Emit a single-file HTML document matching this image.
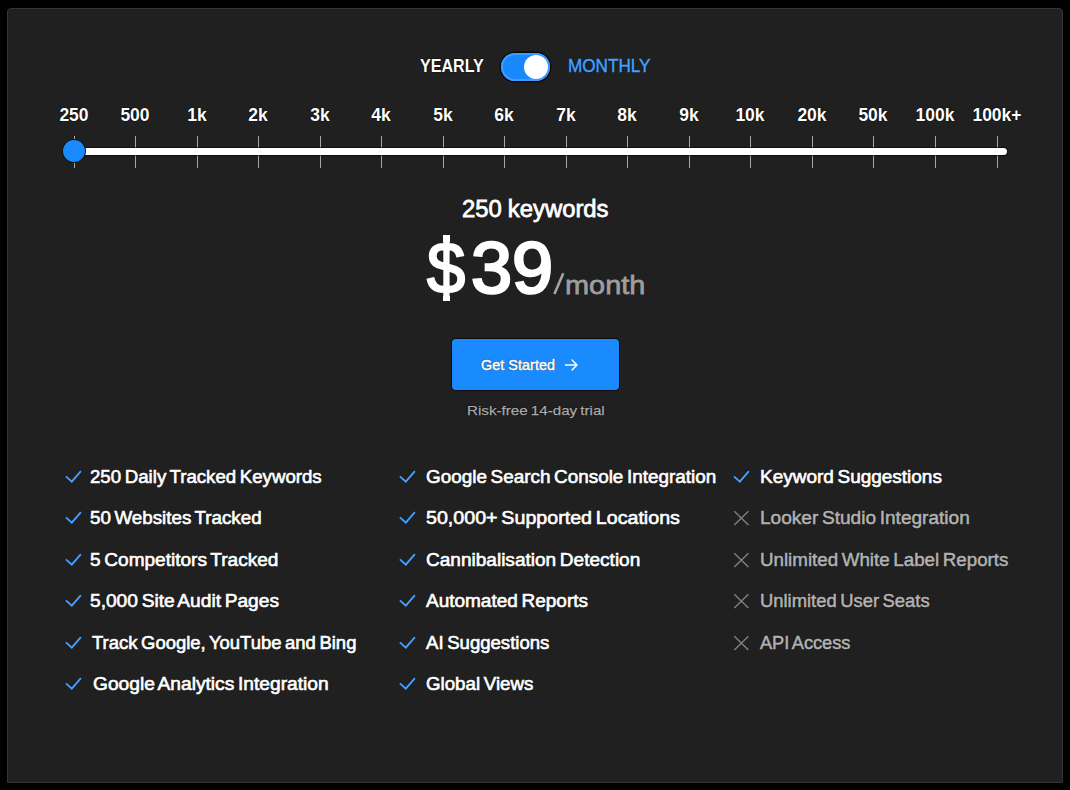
<!DOCTYPE html>
<html><head><meta charset="utf-8"><style>
html,body{margin:0;padding:0;background:#000;width:1070px;height:790px;overflow:hidden;}
body{position:relative;font-family:"Liberation Sans",sans-serif;}
.panel{position:absolute;left:7px;top:8px;width:1054px;height:773px;background:#202020;border:1px solid #363636;border-radius:4px 4px 0 0;}
.t{position:absolute;white-space:nowrap;transform-origin:0 0;text-shadow:0 0 1px #000,0 0 1px #000;}
.r{position:absolute;}
</style></head><body>
<div class="panel"></div>
<div class="t" style="left:420.30px;top:57.05px;font-size:18.5px;line-height:18.5px;font-weight:700;color:#fff;transform:scaleX(0.8684);">YEARLY</div>
<div class="r" style="left:500.8px;top:52.7px;width:49.1px;height:28.8px;background:#1a88fd;border-radius:15px;box-shadow:0 0 0 1.4px #0a0a0a, inset 0 0 0 2px #3d9cff;"></div>
<div class="r" style="left:523.6px;top:54.9px;width:24px;height:24px;background:#fff;border-radius:50%;"></div>
<div class="t" style="left:567.50px;top:57.05px;font-size:18.5px;line-height:18.5px;font-weight:400;color:#42a2ff;-webkit-text-stroke:0.5px #42a2ff;transform:scaleX(0.9259);">MONTHLY</div>
<div class="r" style="left:73.5px;top:136px;width:1px;height:32px;background:#a6a6a6;"></div>
<div class="r" style="left:134.5px;top:136px;width:1px;height:32px;background:#a6a6a6;"></div>
<div class="r" style="left:196.5px;top:136px;width:1px;height:32px;background:#a6a6a6;"></div>
<div class="r" style="left:257.5px;top:136px;width:1px;height:32px;background:#a6a6a6;"></div>
<div class="r" style="left:319.5px;top:136px;width:1px;height:32px;background:#a6a6a6;"></div>
<div class="r" style="left:380.5px;top:136px;width:1px;height:32px;background:#a6a6a6;"></div>
<div class="r" style="left:442.5px;top:136px;width:1px;height:32px;background:#a6a6a6;"></div>
<div class="r" style="left:503.5px;top:136px;width:1px;height:32px;background:#a6a6a6;"></div>
<div class="r" style="left:565.5px;top:136px;width:1px;height:32px;background:#a6a6a6;"></div>
<div class="r" style="left:626.5px;top:136px;width:1px;height:32px;background:#a6a6a6;"></div>
<div class="r" style="left:688.5px;top:136px;width:1px;height:32px;background:#a6a6a6;"></div>
<div class="r" style="left:749.5px;top:136px;width:1px;height:32px;background:#a6a6a6;"></div>
<div class="r" style="left:811.5px;top:136px;width:1px;height:32px;background:#a6a6a6;"></div>
<div class="r" style="left:872.5px;top:136px;width:1px;height:32px;background:#a6a6a6;"></div>
<div class="r" style="left:934.5px;top:136px;width:1px;height:32px;background:#a6a6a6;"></div>
<div class="r" style="left:996.5px;top:136px;width:1px;height:32px;background:#a6a6a6;"></div>
<div class="r" style="left:74px;top:148px;width:933px;height:6.5px;background:#fff;border-radius:3.5px;box-shadow:0 0 1px 1px rgba(0,0,0,0.55);"></div>
<div class="r" style="left:62.8px;top:139.9px;width:22px;height:22px;background:#1a8aff;border-radius:50%;box-shadow:0 0 0 1px #111;"></div>
<div class="t" style="left:59.40px;top:107.18px;font-size:17.5px;line-height:17.5px;font-weight:700;color:#fff;">250</div>
<div class="t" style="left:120.40px;top:107.18px;font-size:17.5px;line-height:17.5px;font-weight:700;color:#fff;">500</div>
<div class="t" style="left:187.25px;top:107.18px;font-size:17.5px;line-height:17.5px;font-weight:700;color:#fff;">1k</div>
<div class="t" style="left:248.25px;top:107.18px;font-size:17.5px;line-height:17.5px;font-weight:700;color:#fff;">2k</div>
<div class="t" style="left:310.25px;top:107.18px;font-size:17.5px;line-height:17.5px;font-weight:700;color:#fff;">3k</div>
<div class="t" style="left:371.25px;top:107.18px;font-size:17.5px;line-height:17.5px;font-weight:700;color:#fff;">4k</div>
<div class="t" style="left:433.25px;top:107.18px;font-size:17.5px;line-height:17.5px;font-weight:700;color:#fff;">5k</div>
<div class="t" style="left:494.25px;top:107.18px;font-size:17.5px;line-height:17.5px;font-weight:700;color:#fff;">6k</div>
<div class="t" style="left:556.25px;top:107.18px;font-size:17.5px;line-height:17.5px;font-weight:700;color:#fff;">7k</div>
<div class="t" style="left:617.25px;top:107.18px;font-size:17.5px;line-height:17.5px;font-weight:700;color:#fff;">8k</div>
<div class="t" style="left:679.25px;top:107.18px;font-size:17.5px;line-height:17.5px;font-weight:700;color:#fff;">9k</div>
<div class="t" style="left:735.40px;top:107.18px;font-size:17.5px;line-height:17.5px;font-weight:700;color:#fff;">10k</div>
<div class="t" style="left:797.40px;top:107.18px;font-size:17.5px;line-height:17.5px;font-weight:700;color:#fff;">20k</div>
<div class="t" style="left:858.40px;top:107.18px;font-size:17.5px;line-height:17.5px;font-weight:700;color:#fff;">50k</div>
<div class="t" style="left:915.52px;top:107.18px;font-size:17.5px;line-height:17.5px;font-weight:700;color:#fff;">100k</div>
<div class="t" style="left:972.42px;top:107.18px;font-size:17.5px;line-height:17.5px;font-weight:700;color:#fff;">100k+</div>
<div class="t" style="left:462.10px;top:197.71px;font-size:23px;line-height:23px;font-weight:400;color:#fff;-webkit-text-stroke:0.8px #fff;transform:scaleX(1.0361);word-spacing:-0.5px;">250 keywords</div>
<div class="t" style="left:427.20px;top:230.91px;font-size:73px;line-height:73px;font-weight:400;color:#fff;-webkit-text-stroke:2.2px #fff;transform:scaleX(0.9409);">$</div>
<div class="t" style="left:470.60px;top:230.91px;font-size:73px;line-height:73px;font-weight:400;color:#fff;-webkit-text-stroke:2.6px #fff;transform:scaleX(1.0123);">39</div>
<div class="r" style="left:443.3px;top:234.5px;width:6.8px;height:7px;background:#fff;"></div>
<div class="r" style="left:443.3px;top:296px;width:6.8px;height:4.5px;background:#fff;"></div>
<svg class="r" style="left:550px;top:270px" width="20" height="28" viewBox="0 0 20 28"><path d="M4.4 23.9L13.3 3.3" stroke="#a3a3a3" stroke-width="2.6" fill="none"/></svg>
<div class="t" style="left:565.40px;top:272.20px;font-size:26.5px;line-height:26.5px;font-weight:400;color:#9e9e9e;-webkit-text-stroke:0.8px #9e9e9e;transform:scaleX(1.0903);">month</div>
<div class="r" style="left:452px;top:339px;width:166.5px;height:51px;background:#1a8aff;border-radius:4px;box-shadow:0 0 0 1px #0c0c0c;"></div>
<div class="t" style="left:480.50px;top:358.38px;font-size:14px;line-height:14px;font-weight:400;color:#fff;-webkit-text-stroke:0.55px #fff;transform:scaleX(1.0335);">Get Started</div>
<svg class="r" style="left:563px;top:357px" width="16" height="16" viewBox="0 0 16 16"><path d="M2.5 8H14M9 3L14 8L9 13" stroke="#fff" stroke-width="1.5" fill="none" stroke-linecap="round" stroke-linejoin="round"/></svg>
<div class="t" style="left:466.60px;top:404.10px;font-size:13.5px;line-height:13.5px;font-weight:400;color:#ababab;-webkit-text-stroke:0.25px #ababab;transform:scaleX(1.1236);word-spacing:-1px;">Risk-free 14-day trial</div>
<svg class="r" style="left:65.1px;top:468.8px" width="18" height="16" viewBox="0 0 18 16"><path d="M0.9 7.3L6.8 12.6L15.9 2.1" stroke="#45a0ff" stroke-width="1.8" fill="none" stroke-linecap="butt"/></svg>
<div class="t" style="left:89.50px;top:467.86px;font-size:18px;line-height:18px;font-weight:400;color:#fff;-webkit-text-stroke:0.65px #fff;transform:scaleX(1.0362);word-spacing:-1.5px;">250 Daily Tracked Keywords</div>
<svg class="r" style="left:65.1px;top:510.24px" width="18" height="16" viewBox="0 0 18 16"><path d="M0.9 7.3L6.8 12.6L15.9 2.1" stroke="#45a0ff" stroke-width="1.8" fill="none" stroke-linecap="butt"/></svg>
<div class="t" style="left:89.50px;top:509.30px;font-size:18px;line-height:18px;font-weight:400;color:#fff;-webkit-text-stroke:0.65px #fff;transform:scaleX(1.0416);word-spacing:-1.5px;">50 Websites Tracked</div>
<svg class="r" style="left:65.1px;top:551.6800000000001px" width="18" height="16" viewBox="0 0 18 16"><path d="M0.9 7.3L6.8 12.6L15.9 2.1" stroke="#45a0ff" stroke-width="1.8" fill="none" stroke-linecap="butt"/></svg>
<div class="t" style="left:89.50px;top:550.74px;font-size:18px;line-height:18px;font-weight:400;color:#fff;-webkit-text-stroke:0.65px #fff;transform:scaleX(1.0578);word-spacing:-1.5px;">5 Competitors Tracked</div>
<svg class="r" style="left:65.1px;top:593.12px" width="18" height="16" viewBox="0 0 18 16"><path d="M0.9 7.3L6.8 12.6L15.9 2.1" stroke="#45a0ff" stroke-width="1.8" fill="none" stroke-linecap="butt"/></svg>
<div class="t" style="left:89.50px;top:592.18px;font-size:18px;line-height:18px;font-weight:400;color:#fff;-webkit-text-stroke:0.65px #fff;transform:scaleX(1.0639);word-spacing:-1.5px;">5,000 Site Audit Pages</div>
<svg class="r" style="left:65.1px;top:634.56px" width="18" height="16" viewBox="0 0 18 16"><path d="M0.9 7.3L6.8 12.6L15.9 2.1" stroke="#45a0ff" stroke-width="1.8" fill="none" stroke-linecap="butt"/></svg>
<div class="t" style="left:92.30px;top:633.62px;font-size:18px;line-height:18px;font-weight:400;color:#fff;-webkit-text-stroke:0.65px #fff;transform:scaleX(1.0254);word-spacing:-1.5px;">Track Google, YouTube and Bing</div>
<svg class="r" style="left:65.1px;top:676.0px" width="18" height="16" viewBox="0 0 18 16"><path d="M0.9 7.3L6.8 12.6L15.9 2.1" stroke="#45a0ff" stroke-width="1.8" fill="none" stroke-linecap="butt"/></svg>
<div class="t" style="left:92.50px;top:675.06px;font-size:18px;line-height:18px;font-weight:400;color:#fff;-webkit-text-stroke:0.65px #fff;transform:scaleX(1.0658);word-spacing:-1.5px;">Google Analytics Integration</div>
<svg class="r" style="left:399px;top:468.8px" width="18" height="16" viewBox="0 0 18 16"><path d="M0.9 7.3L6.8 12.6L15.9 2.1" stroke="#45a0ff" stroke-width="1.8" fill="none" stroke-linecap="butt"/></svg>
<div class="t" style="left:426.00px;top:467.86px;font-size:18px;line-height:18px;font-weight:400;color:#fff;-webkit-text-stroke:0.65px #fff;transform:scaleX(1.0492);word-spacing:-1.5px;">Google Search Console Integration</div>
<svg class="r" style="left:399px;top:510.24px" width="18" height="16" viewBox="0 0 18 16"><path d="M0.9 7.3L6.8 12.6L15.9 2.1" stroke="#45a0ff" stroke-width="1.8" fill="none" stroke-linecap="butt"/></svg>
<div class="t" style="left:426.00px;top:509.30px;font-size:18px;line-height:18px;font-weight:400;color:#fff;-webkit-text-stroke:0.65px #fff;transform:scaleX(1.0911);word-spacing:-1.5px;">50,000+ Supported Locations</div>
<svg class="r" style="left:399px;top:551.6800000000001px" width="18" height="16" viewBox="0 0 18 16"><path d="M0.9 7.3L6.8 12.6L15.9 2.1" stroke="#45a0ff" stroke-width="1.8" fill="none" stroke-linecap="butt"/></svg>
<div class="t" style="left:426.00px;top:550.74px;font-size:18px;line-height:18px;font-weight:400;color:#fff;-webkit-text-stroke:0.65px #fff;transform:scaleX(1.0575);word-spacing:-1.5px;">Cannibalisation Detection</div>
<svg class="r" style="left:399px;top:593.12px" width="18" height="16" viewBox="0 0 18 16"><path d="M0.9 7.3L6.8 12.6L15.9 2.1" stroke="#45a0ff" stroke-width="1.8" fill="none" stroke-linecap="butt"/></svg>
<div class="t" style="left:426.00px;top:592.18px;font-size:18px;line-height:18px;font-weight:400;color:#fff;-webkit-text-stroke:0.65px #fff;transform:scaleX(1.0547);word-spacing:-1.5px;">Automated Reports</div>
<svg class="r" style="left:399px;top:634.56px" width="18" height="16" viewBox="0 0 18 16"><path d="M0.9 7.3L6.8 12.6L15.9 2.1" stroke="#45a0ff" stroke-width="1.8" fill="none" stroke-linecap="butt"/></svg>
<div class="t" style="left:426.00px;top:633.62px;font-size:18px;line-height:18px;font-weight:400;color:#fff;-webkit-text-stroke:0.65px #fff;transform:scaleX(1.0318);word-spacing:-1.5px;">AI Suggestions</div>
<svg class="r" style="left:399px;top:676.0px" width="18" height="16" viewBox="0 0 18 16"><path d="M0.9 7.3L6.8 12.6L15.9 2.1" stroke="#45a0ff" stroke-width="1.8" fill="none" stroke-linecap="butt"/></svg>
<div class="t" style="left:426.00px;top:675.06px;font-size:18px;line-height:18px;font-weight:400;color:#fff;-webkit-text-stroke:0.65px #fff;transform:scaleX(1.0397);word-spacing:-1.5px;">Global Views</div>
<svg class="r" style="left:732.9px;top:468.8px" width="18" height="16" viewBox="0 0 18 16"><path d="M0.9 7.3L6.8 12.6L15.9 2.1" stroke="#45a0ff" stroke-width="1.8" fill="none" stroke-linecap="butt"/></svg>
<div class="t" style="left:760.00px;top:467.86px;font-size:18px;line-height:18px;font-weight:400;color:#fff;-webkit-text-stroke:0.65px #fff;transform:scaleX(1.0539);word-spacing:-1.5px;">Keyword Suggestions</div>
<svg class="r" style="left:732.7px;top:510.24px" width="18" height="16" viewBox="0 0 18 16"><path d="M1.3 1.3L15.4 15M15.4 1.3L1.3 15" stroke="#7e7e7e" stroke-width="1.5" fill="none"/></svg>
<div class="t" style="left:760.00px;top:509.30px;font-size:18px;line-height:18px;font-weight:400;color:#b2b2b2;-webkit-text-stroke:0.55px #b2b2b2;transform:scaleX(1.0588);word-spacing:-1.5px;">Looker Studio Integration</div>
<svg class="r" style="left:732.7px;top:551.6800000000001px" width="18" height="16" viewBox="0 0 18 16"><path d="M1.3 1.3L15.4 15M15.4 1.3L1.3 15" stroke="#7e7e7e" stroke-width="1.5" fill="none"/></svg>
<div class="t" style="left:760.00px;top:550.74px;font-size:18px;line-height:18px;font-weight:400;color:#b2b2b2;-webkit-text-stroke:0.55px #b2b2b2;transform:scaleX(1.0411);word-spacing:-1.5px;">Unlimited White Label Reports</div>
<svg class="r" style="left:732.7px;top:593.12px" width="18" height="16" viewBox="0 0 18 16"><path d="M1.3 1.3L15.4 15M15.4 1.3L1.3 15" stroke="#7e7e7e" stroke-width="1.5" fill="none"/></svg>
<div class="t" style="left:760.00px;top:592.18px;font-size:18px;line-height:18px;font-weight:400;color:#b2b2b2;-webkit-text-stroke:0.55px #b2b2b2;transform:scaleX(1.0214);word-spacing:-1.5px;">Unlimited User Seats</div>
<svg class="r" style="left:732.7px;top:634.56px" width="18" height="16" viewBox="0 0 18 16"><path d="M1.3 1.3L15.4 15M15.4 1.3L1.3 15" stroke="#7e7e7e" stroke-width="1.5" fill="none"/></svg>
<div class="t" style="left:760.00px;top:633.62px;font-size:18px;line-height:18px;font-weight:400;color:#b2b2b2;-webkit-text-stroke:0.55px #b2b2b2;transform:scaleX(1.0095);word-spacing:-1.5px;">API Access</div>
</body></html>
